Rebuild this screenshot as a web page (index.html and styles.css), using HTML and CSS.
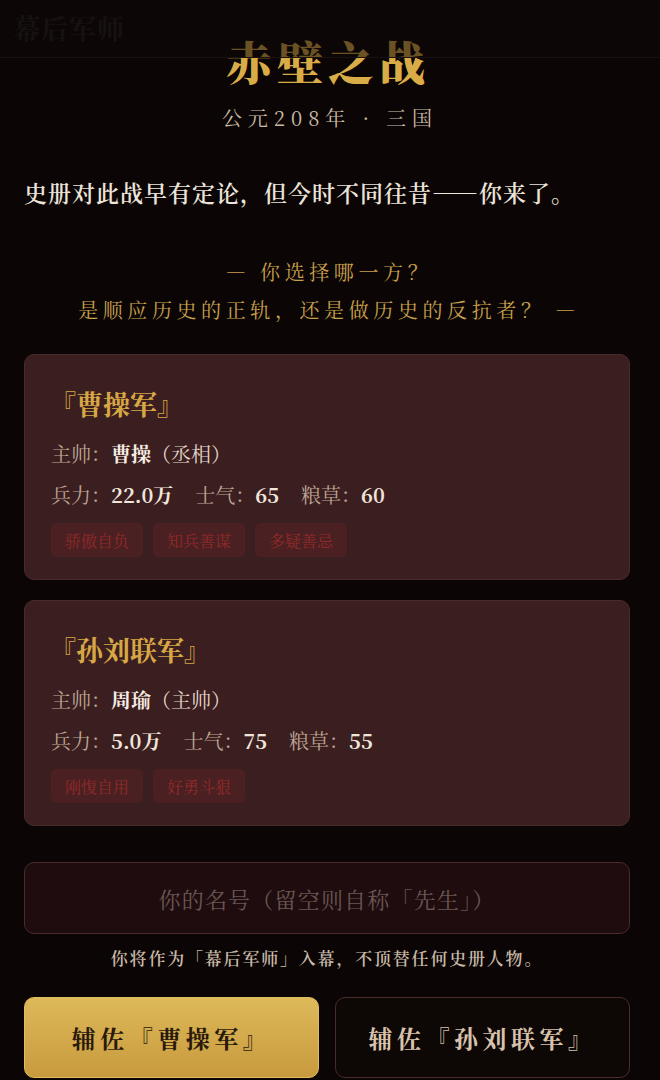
FILE: index.html
```html
<!DOCTYPE html>
<html lang="zh-CN">
<head>
<meta charset="utf-8">
<title>赤壁之战</title>
<link rel="stylesheet" href="styles.css">
</head>
<body>
<header class="topbar"><span class="brand">幕后军师</span></header>
<main class="page">
  <h1 class="title">赤壁之战</h1>
  <p class="era">公元208年 · 三国</p>
  <p class="intro">史册对此战早有定论，但今时不同往昔——你来了。</p>
  <p class="question">— 你选择哪一方？<br>是顺应历史的正轨，还是做历史的反抗者？ —</p>

  <section class="card">
    <h2 class="card-title">『曹操军』</h2>
    <p class="line"><span class="label">主帅：</span><b class="strong">曹操</b><span class="val">（丞相）</span></p>
    <p class="line stats">
      <span><span class="label">兵力：</span><b class="num">22.0万</b></span>
      <span><span class="label">士气：</span><b class="num">65</b></span>
      <span><span class="label">粮草：</span><b class="num">60</b></span>
    </p>
    <div class="tags"><span class="tag">骄傲自负</span><span class="tag">知兵善谋</span><span class="tag">多疑善忌</span></div>
  </section>

  <section class="card">
    <h2 class="card-title">『孙刘联军』</h2>
    <p class="line"><span class="label">主帅：</span><b class="strong">周瑜</b><span class="val">（主帅）</span></p>
    <p class="line stats">
      <span><span class="label">兵力：</span><b class="num">5.0万</b></span>
      <span><span class="label">士气：</span><b class="num">75</b></span>
      <span><span class="label">粮草：</span><b class="num">55</b></span>
    </p>
    <div class="tags"><span class="tag">刚愎自用</span><span class="tag">好勇斗狠</span></div>
  </section>

  <input class="name-input" type="text" placeholder="你的名号（留空则自称「先生」）">
  <p class="note">你将作为「幕后军师」入幕，不顶替任何史册人物。</p>

  <div class="actions">
    <button class="btn btn-gold">辅佐『曹操军』</button>
    <button class="btn btn-dark">辅佐『孙刘联军』</button>
  </div>
</main>
</body>
</html>
```
FILE: styles.css
```css
* { box-sizing: border-box; }
html, body {
  margin: 0;
  padding: 0;
  background: #0b0605;
}
body {
  font-family: "Noto Serif CJK SC", "Liberation Serif", "Noto Sans CJK SC", serif;
  color: #e6dcd2;
  width: 660px;
  height: 1080px;
  overflow: hidden;
}
.topbar {
  position: absolute;
  left: 0;
  top: 0;
  width: 660px;
  height: 58px;
  background: rgba(14, 9, 8, 0.55);
  border-bottom: 1px solid #1a1210;
  display: flex;
  align-items: center;
  padding-left: 13px;
  padding-bottom: 3px;
  z-index: 2;
}
.brand {
  font-size: 27px;
  font-weight: 700;
  color: #171110;
  letter-spacing: 1px;
}
.page {
  padding: 31px 30px 0 24px;
  display: flex;
  flex-direction: column;
}
.title {
  margin: 0;
  font-size: 46px;
  line-height: 58px;
  font-weight: 900;
  color: #d9ac47;
  text-align: center;
  letter-spacing: 5px;
  padding-left: 2px;
}
.era {
  margin: 15px 0 0;
  font-size: 20px;
  line-height: 28px;
  color: #cbbba6;
  text-align: center;
  letter-spacing: 6px;
  padding-left: 6px;
}
.intro {
  margin: 44px 0 0;
  font-size: 23px;
  line-height: 34px;
  color: #ece4da;
  font-weight: 600;
  letter-spacing: 1px;
  white-space: nowrap;
}
.question {
  margin: 43px 0 0;
  font-size: 20px;
  line-height: 38px;
  color: #c9a04c;
  text-align: center;
  letter-spacing: 4.6px;
  padding-left: 4px;
  white-space: nowrap;
}
.card {
  margin-top: 25px;
  background: #3b1e1f;
  border: 1px solid #4a2b2b;
  border-radius: 10px;
  padding: 29px 26px 23px;
  height: 226px;
}
.card + .card { margin-top: 20px; }
.card-title {
  margin: 0 0 0 -2px;
  font-size: 27px;
  line-height: 40px;
  font-weight: 700;
  color: #d7a746;
}
.line {
  margin: 11px 0 0;
  font-size: 20px;
  line-height: 30px;
  color: #e2d6ca;
}
.card-title + .line { margin-top: 15px; }
.label { color: #bba595; }
.strong { color: #f6ece2; font-weight: 700; }
.val { color: #e2d6ca; }
.stats { display: flex; gap: 22px; }
.num { color: #efe5db; font-weight: 700; }
.tags {
  margin-top: 13px;
  display: flex;
  gap: 10px;
}
.tag {
  display: inline-flex;
  align-items: center;
  justify-content: center;
  width: 92px;
  height: 34px;
  border-radius: 5px;
  background: #4a2022;
  color: #922a28;
  font-size: 16px;
}
.name-input {
  margin-top: 36px;
  width: 100%;
  height: 72px;
  background: #1f0c0e;
  border: 1px solid #4a2a2a;
  border-radius: 10px;
  font-family: inherit;
  font-size: 22px;
  letter-spacing: 1.2px;
  color: #e6dcd2;
  text-align: center;
  outline: none;
}
.name-input::placeholder { color: #6a5653; }
.note {
  margin: 12px 0 0;
  font-size: 17px;
  line-height: 24px;
  text-align: center;
  color: #c9b9a8;
  font-weight: 600;
  letter-spacing: 1.8px;
  white-space: nowrap;
}
.actions {
  margin-top: 27px;
  display: grid;
  grid-template-columns: 1fr 1fr;
  gap: 16px;
}
.btn {
  height: 81px;
  border-radius: 10px;
  font-family: inherit;
  font-size: 24px;
  font-weight: 700;
  letter-spacing: 4.5px;
}
.btn-gold {
  background: linear-gradient(180deg, #ddb95a 0%, #c89a3e 100%);
  border: 1px solid #e0bd60;
  color: #2a1a0c;
}
.btn-dark {
  background: #0d0706;
  border: 1px solid #4a2a2a;
  color: #d9c2ab;
}
```
